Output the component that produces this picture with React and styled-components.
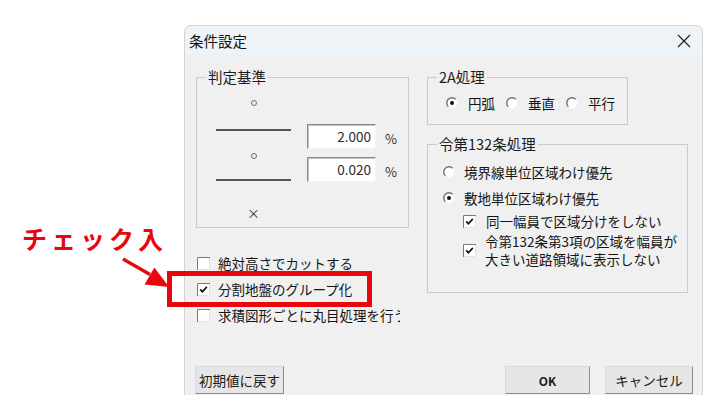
import React from "react";
import styled, { createGlobalStyle } from "styled-components";

const UI = `"Noto Sans CJK JP", "Noto Sans", sans-serif`;
const RED = "#e8070d";

const Global = createGlobalStyle`
  html, body { margin: 0; padding: 0; background: #fff; }
  body { font-family: ${UI}; }
  * { box-sizing: border-box; }
`;

const Page = styled.div`
  position: relative;
  width: 712px;
  height: 405px;
  overflow: hidden;
  background: #fff;
  padding: 25px 0 0 184px;
`;

const Dialog = styled.div`
  width: 519px;
  height: 370px;
  display: flex;
  flex-direction: column;
  background: #f0f0f0;
  border: 1px solid #cfd4d7;
  border-bottom: none;
  border-radius: 7px 7px 0 0;
  overflow: hidden;
  font-family: ${UI};
  color: #141414;
  font-size: 13.5px;
`;

const TitleBar = styled.div`
  flex: none;
  height: 29px;
  display: flex;
  align-items: center;
  justify-content: space-between;
  background: #edf3f6;
  padding: 0 11px 0 4px;
`;

const Title = styled.div`
  font-size: 14.5px;
  line-height: 18px;
  color: #111;
`;

const CloseIcon = () => (
  <svg width="14" height="14" viewBox="0 0 14 14">
    <path d="M1 1 L13 13 M13 1 L1 13" stroke="#222" strokeWidth="1.2" fill="none" />
  </svg>
);

const Body = styled.div`
  display: flex;
  gap: 18px;
  padding: 13px 14px 0 11px;
`;

const Column = styled.div`
  width: ${(p) => p.$w}px;
  display: flex;
  flex-direction: column;
`;

const Group = styled.fieldset`
  margin: ${(p) => p.$mt || 0}px 0 0 0;
  padding: 0;
  border: 1px solid #cacaca;
  min-width: 0;
  width: ${(p) => (p.$w ? `${p.$w}px` : "auto")};
`;

const Legend = styled.legend`
  margin-left: 9px;
  padding: 0 2px;
  font-size: 14.5px;
  line-height: 18px;
  color: #1b1b1b;
`;

const GroupInner = styled.div`
  display: flex;
  flex-direction: ${(p) => p.$dir || "column"};
  gap: ${(p) => p.$gap || 0}px;
  padding: ${(p) => p.$pad};
`;

const SymCol = styled.div`
  width: 75px;
  display: flex;
  flex-direction: column;
  align-items: center;
`;

const Sym = styled.div`
  height: 26px;
  margin-top: ${(p) => p.$mt}px;
  display: flex;
  align-items: center;
  justify-content: center;
  color: #333;
  font-size: 13px;
`;

const Ring = styled.span`
  width: 6px;
  height: 6px;
  border: 1.4px solid #6e6e6e;
  border-radius: 50%;
`;

const Rule = styled.div`
  align-self: stretch;
  height: 2px;
  margin-top: ${(p) => p.$mt}px;
  background: #555;
`;

const InputCol = styled.div`
  display: flex;
  flex-direction: column;
`;

const InputRow = styled.div`
  display: flex;
  align-items: center;
  gap: 9px;
  margin-top: ${(p) => p.$mt}px;
`;

const NumBox = styled.div`
  width: 69px;
  height: 25px;
  background: #fff;
  border-style: solid;
  border-width: 1px;
  border-color: #8a8a8a #f4f4f4 #f4f4f4 #8a8a8a;
  box-shadow: inset 1px 1px 0 #c4c4c4;
  text-align: right;
  padding-right: 4px;
  font-size: 13.5px;
  line-height: 23px;
  color: #2a2a2a;
`;

const Unit = styled.span`
  font-size: 13px;
  color: #333;
  padding-top: 4px;
`;

const Row = styled.div`
  display: flex;
  align-items: center;
  gap: ${(p) => p.$gap}px;
  height: ${(p) => (p.$h ? `${p.$h}px` : "auto")};
  margin-top: ${(p) => p.$mt || 0}px;
  padding-left: ${(p) => p.$pl || 0}px;
`;

const Label = styled.span`
  white-space: nowrap;
  line-height: 18px;
  max-width: ${(p) => (p.$max ? `${p.$max}px` : "none")};
  overflow: hidden;
`;

const Lines = styled.div`
  display: flex;
  flex-direction: column;
  line-height: 18px;
  white-space: nowrap;
`;

const RadioGroupRow = styled.div`
  display: flex;
  align-items: center;
  gap: 11px;
  height: 20px;
  margin-top: 7px;
  padding-left: 18px;
`;

const Item = styled.div`
  display: flex;
  align-items: center;
  gap: 10px;
`;

const SvgBox = styled.svg`
  flex: none;
  display: block;
`;

const Radio = ({ checked }) => (
  <SvgBox width="12" height="12" viewBox="0 0 12 12">
    <circle cx="6" cy="6" r="5.4" fill="#fff" />
    <path d="M9.7 2.3 A5.2 5.2 0 0 0 2.3 9.7" stroke="#6f6f6f" strokeWidth="1.4" fill="none" />
    {checked && <circle cx="6" cy="6" r="2" fill="#111" />}
  </SvgBox>
);

const Check = ({ checked }) => (
  <SvgBox width="13" height="13" viewBox="0 0 13 13">
    <rect x="0" y="0" width="13" height="13" fill="#fff" />
    <path d="M0.5 13 V0.5 H13" stroke="#7a7a7a" fill="none" />
    <path d="M12.5 1 V12.5 H1" stroke="#e2e2e2" fill="none" />
    {checked && (
      <path d="M3.2 6.4 L5.4 8.7 L9.8 3.9" stroke="#111" strokeWidth="1.7" fill="none" />
    )}
  </SvgBox>
);

const ChecksList = styled.div`
  display: flex;
  flex-direction: column;
  margin-top: 22px;
  padding-left: 1px;
`;

const Footer = styled.div`
  margin-top: auto;
  display: flex;
  align-items: flex-end;
  gap: 15px;
  padding: 0 9px 1px 10px;
`;

const Spacer = styled.div`
  flex: 1;
`;

const Button = styled.div`
  width: ${(p) => p.$w}px;
  height: 28px;
  display: flex;
  align-items: center;
  justify-content: center;
  background: #e6e6e6;
  border: 1px solid;
  border-color: #dadada #8c8c8c #8c8c8c #dadada;
  font-size: ${(p) => (p.$bold ? "12px" : "13.5px")};
  font-weight: ${(p) => (p.$bold ? 700 : 400)};
  color: #1b1b1b;
  white-space: nowrap;
`;

const Callout = styled.div`
  position: absolute;
  left: 22px;
  top: 223px;
  font-family: ${UI};
  font-weight: 700;
  font-size: 25px;
  line-height: 30px;
  letter-spacing: 4px;
  color: ${RED};
  white-space: nowrap;
`;

const ArrowBox = styled.svg`
  position: absolute;
  left: 115px;
  top: 250px;
`;

const Highlight = styled.div`
  position: absolute;
  left: 167px;
  top: 271px;
  width: 205px;
  height: 36px;
  border: 5px solid ${RED};
`;

export default function App() {
  return (
    <>
      <Global />
      <Page>
        <Dialog>
          <TitleBar>
            <Title>条件設定</Title>
            <CloseIcon />
          </TitleBar>
          <Body>
            <Column $w={213}>
              <Group>
                <Legend>判定基準</Legend>
                <GroupInner $dir="row" $gap={16} $pad="0 0 2px 19px">
                  <SymCol>
                    <Sym $mt={4}>
                      <Ring />
                    </Sym>
                    <Rule $mt={13} />
                    <Sym $mt={12}>
                      <Ring />
                    </Sym>
                    <Rule $mt={10} />
                    <Sym $mt={18}>×</Sym>
                  </SymCol>
                  <InputCol>
                    <InputRow $mt={38}>
                      <NumBox>2.000</NumBox>
                      <Unit>%</Unit>
                    </InputRow>
                    <InputRow $mt={8}>
                      <NumBox>0.020</NumBox>
                      <Unit>%</Unit>
                    </InputRow>
                  </InputCol>
                </GroupInner>
              </Group>
              <ChecksList>
                <Row $gap={8} $h={26}>
                  <Check />
                  <Label>絶対高さでカットする</Label>
                </Row>
                <Row $gap={8} $h={26}>
                  <Check checked />
                  <Label>分割地盤のグループ化</Label>
                </Row>
                <Row $gap={8} $h={26}>
                  <Check />
                  <Label $max={182}>求積図形ごとに丸目処理を行う</Label>
                </Row>
              </ChecksList>
            </Column>
            <Column $w={261}>
              <Group $w={201}>
                <Legend>2A処理</Legend>
                <GroupInner $pad="0 0 11px 0">
                  <RadioGroupRow>
                    <Item>
                      <Radio checked />
                      <Label>円弧</Label>
                    </Item>
                    <Item>
                      <Radio />
                      <Label>垂直</Label>
                    </Item>
                    <Item>
                      <Radio />
                      <Label>平行</Label>
                    </Item>
                  </RadioGroupRow>
                </GroupInner>
              </Group>
              <Group $mt={10}>
                <Legend>令第132条処理</Legend>
                <GroupInner $pad="0 0 24px 0">
                  <Row $gap={9} $h={26} $mt={6} $pl={15}>
                    <Radio />
                    <Label>境界線単位区域わけ優先</Label>
                  </Row>
                  <Row $gap={9} $h={26} $pl={15}>
                    <Radio checked />
                    <Label>敷地単位区域わけ優先</Label>
                  </Row>
                  <Row $gap={10} $h={20} $pl={35}>
                    <Check checked />
                    <Label>同一幅員で区域分けをしない</Label>
                  </Row>
                  <Row $gap={9} $mt={1} $pl={35}>
                    <Check checked />
                    <Lines>
                      <span>令第132条第3項の区域を幅員が</span>
                      <span>大きい道路領域に表示しない</span>
                    </Lines>
                  </Row>
                </GroupInner>
              </Group>
            </Column>
          </Body>
          <Footer>
            <Button $w={89}>初期値に戻す</Button>
            <Spacer />
            <Button $w={85} $bold>
              OK
            </Button>
            <Button $w={88}>キャンセル</Button>
          </Footer>
        </Dialog>
        <Callout>チェック入</Callout>
        <ArrowBox width="60" height="45" viewBox="0 0 60 45">
          <path d="M8 9 L35 24.5" stroke={RED} strokeWidth="3.2" fill="none" />
          <polygon points="54,37 29.6,34.6 39.4,17.4" fill={RED} />
        </ArrowBox>
        <Highlight />
      </Page>
    </>
  );
}
